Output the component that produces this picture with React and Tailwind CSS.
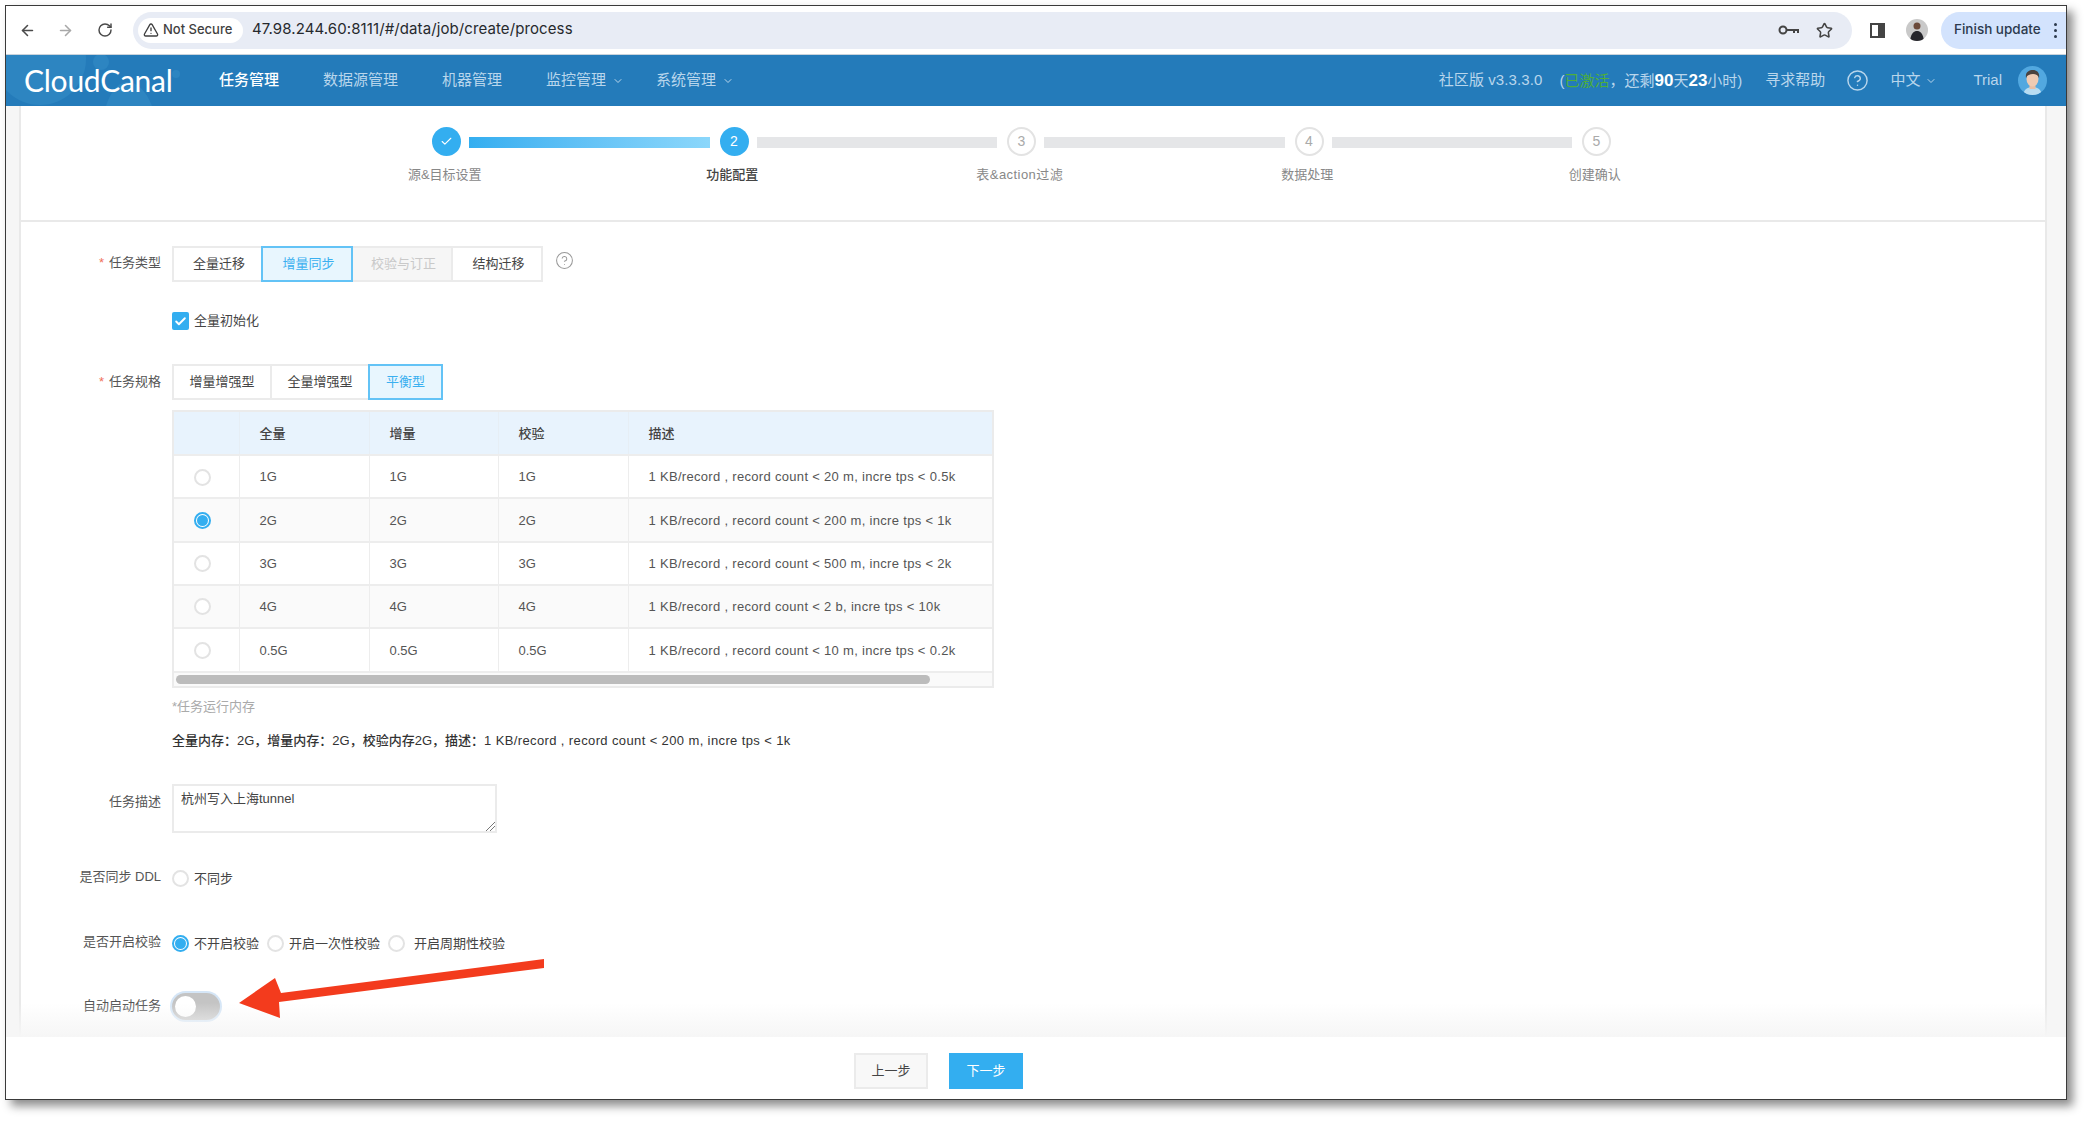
import React from 'react';
import { ArrowLeft, ArrowRight, RotateCw, TriangleAlert, Star, ChevronDown, Check, CircleHelp } from 'lucide-react';

const steps = ['源&目标设置', '功能配置', '表&action过滤', '数据处理', '创建确认'];

const specs = [
  ['1G', '1 KB/record , record count < 20 m, incre tps < 0.5k'],
  ['2G', '1 KB/record , record count < 200 m, incre tps < 1k'],
  ['3G', '1 KB/record , record count < 500 m, incre tps < 2k'],
  ['4G', '1 KB/record , record count < 2 b, incre tps < 10k'],
  ['0.5G', '1 KB/record , record count < 10 m, incre tps < 0.2k'],
];

function Radio({ on }) {
  return (
    <span className={`flex h-[17px] w-[17px] shrink-0 items-center justify-center rounded-full border-2 bg-white ${on ? 'border-[#33aef0]' : 'border-[#e3e3e3]'}`}>
      {on && <span className="h-[11px] w-[11px] rounded-full bg-[#33aef0]" />}
    </span>
  );
}

function Seg({ items, nudge }) {
  return (
    <div className="flex h-[36px]">
      {items.map(([label, w, state]) => (
        <div
          key={label}
          style={{ width: w }}
          className={`-ml-[2px] flex items-center justify-center border-2 first:ml-0 ${nudge ? 'pl-[3px]' : ''} ${
            state === 'on'
              ? 'z-10 border-[#63c3f6] bg-[#e8f6fe] text-[#3ab0f0]'
              : state === 'off'
                ? 'border-[#ebebeb] bg-[#f6f6f6] text-[#c9c9c9]'
                : 'border-[#ebebeb] bg-white text-[#444]'
          }`}
        >
          {label}
        </div>
      ))}
    </div>
  );
}

function Label({ children, req }) {
  return (
    <div className="w-[140px] shrink-0 text-right text-[#555]">
      {req && <span className="mr-[5px] text-[#f0715a]">*</span>}
      {children}
    </div>
  );
}

function Logo() {
  return (
    <div className="relative z-10 -mt-[2px] w-[150px] font-['Lato',sans-serif] text-[30px] leading-[30px] font-normal tracking-[-0.25px] text-white">
      CloudCanal
    </div>
  );
}

export default function App() {
  return (
    <div className="relative h-[1122px] w-[2088px] overflow-hidden bg-white font-['Liberation_Sans','Noto_Sans_CJK_SC',sans-serif] text-[13px]">
      <div className="ml-[5px] mt-[5px] flex h-[1095px] w-[2062px] flex-col border border-[#3a3a3a] bg-white shadow-[6px_6px_9px_rgba(0,0,0,0.45)]">
        {/* chrome bar */}
        <div className="flex h-[49px] shrink-0 items-center border-b border-[#c9d3dc] pl-[13px] font-['Inter',sans-serif] text-[#3c4043]">
          <ArrowLeft className="h-[17px] w-[17px] text-[#4a4a4a]" strokeWidth={2.2} />
          <ArrowRight className="ml-[21px] h-[17px] w-[17px] text-[#a8a8a8]" strokeWidth={2.2} />
          <RotateCw className="ml-[23px] h-[16px] w-[16px] text-[#4a4a4a]" strokeWidth={2.2} />
          <div className="ml-[20px] flex h-[37px] w-[1719px] items-center rounded-full bg-[#e8ecf5] pl-[5px] pr-[19px]">
            <div className="flex h-[25px] w-[105px] items-center rounded-full bg-white pl-[5px] text-[13px] font-medium text-[#3f3f3f]">
              <TriangleAlert className="mr-[4px] h-[16px] w-[16px]" strokeWidth={2} />
              Not Secure
            </div>
            <span className="ml-[9px] -mt-[1px] text-[15px] tracking-[0.1px] text-[#26292d]">47.98.244.60:8111/#/data/job/create/process</span>
            <svg className="ml-auto h-[12px] w-[22px] text-[#444]" viewBox="0 0 22 12" fill="none" stroke="currentColor" strokeWidth="2">
              <circle cx="5" cy="6" r="3.5" />
              <path d="M9 6h11v3M16 6v3" />
            </svg>
            <Star className="ml-[16px] h-[17px] w-[17px] text-[#444]" strokeWidth={2.2} />
          </div>
          <svg className="ml-[18px] h-[15px] w-[15px]" viewBox="0 0 15 15">
            <rect x="1" y="1" width="13" height="13" fill="#fff" stroke="#444" strokeWidth="2" />
            <rect x="8" y="1" width="6" height="13" fill="#444" />
          </svg>
          <svg className="ml-[21px] h-[22px] w-[22px] rounded-full" viewBox="0 0 22 22">
            <rect width="22" height="22" fill="#c9c9c9" />
            <circle cx="11" cy="7" r="3.5" fill="#6b4a3a" />
            <path d="M4 22c1-8 4-10 7-10s6 2 7 10z" fill="#26262c" />
          </svg>
          <div className="ml-[13px] flex h-[37px] w-[125px] items-center rounded-l-full bg-[#d3e3fd] pl-[13px] text-[13.5px] font-medium text-[#2c3a4d]">
            <span className="-mt-[1px]">Finish update</span>
            <span className="ml-[13px] flex flex-col gap-[3px]">
              <i className="h-[3px] w-[3px] rounded-full bg-[#2c3a4d]" />
              <i className="h-[3px] w-[3px] rounded-full bg-[#2c3a4d]" />
              <i className="h-[3px] w-[3px] rounded-full bg-[#2c3a4d]" />
            </span>
          </div>
        </div>

        {/* header */}
        <div className="relative flex h-[51px] shrink-0 items-center overflow-hidden bg-[#247bba] pl-[18px] pr-[19px] text-[15px] text-[#b9d6ec]">
          <svg className="absolute left-0 top-0 h-[51px] w-[180px]" viewBox="0 0 180 51">
            <circle cx="34" cy="4" r="46" fill="#2d85c1" />
            <circle cx="95" cy="7" r="8" fill="#2d85c1" />
            <path d="M100 51c6-18 14-24 22-24s18 8 24 24z" fill="#2d85c1" />
            <circle cx="170" cy="19" r="4" fill="#2d85c1" />
          </svg>
          <Logo />
          <div className="relative ml-[45px] flex items-center gap-[44px]">
            <span className="font-medium text-white">任务管理</span>
            <span>数据源管理</span>
            <span>机器管理</span>
            <span className="flex items-center">监控管理<ChevronDown className="ml-[6px] h-[12px] w-[12px]" /></span>
            <span className="-ml-[12px] flex items-center">系统管理<ChevronDown className="ml-[6px] h-[12px] w-[12px]" /></span>
          </div>
          <div className="ml-auto flex items-center text-[15px]">
            <span className="tracking-[0.1px]">社区版 v3.3.3.0</span>
            <span className="ml-[17px]">
              (<span className="text-[#4eae3a]">已激活</span>{'\uff0c'}还剩<b className="text-[17px] text-white">90</b>天<b className="text-[17px] text-white">23</b>小时)
            </span>
            <span className="ml-[23px]">寻求帮助</span>
            <CircleHelp className="ml-[21px] h-[23px] w-[23px]" strokeWidth={1.5} />
            <span className="ml-[21px] flex items-center">中文<ChevronDown className="ml-[5px] h-[12px] w-[12px]" /></span>
            <span className="ml-[36px]">Trial</span>
            <svg className="ml-[16px] h-[29px] w-[29px]" viewBox="0 0 29 29">
              <clipPath id="av"><circle cx="14.5" cy="14.5" r="14.5" /></clipPath>
              <g clipPath="url(#av)">
                <rect width="29" height="29" fill="#52a8e0" />
                <path d="M5 29c1-6 5-8 9.5-8s8.500 2 9.500 8z" fill="#b7dcf2" />
                <rect x="11.500" y="17" width="6" height="6" fill="#e8bfa6" />
                <ellipse cx="14.500" cy="13" rx="6" ry="7.500" fill="#efcbb3" />
                <path d="M8 12c-1-6 3-8 7-8s7 3 6 8c-1-3-3-4-6-4s-6 1-7 4z" fill="#4a4340" />
              </g>
            </svg>
          </div>
        </div>

        {/* page body */}
        <div className="relative flex min-h-0 flex-1 overflow-hidden">
          <div className="w-[15px] shrink-0 border-r-2 border-[#e9e9e9] bg-[#f6f6f6]" />
          <div className="min-w-0 flex-1">
            <div className="h-[116px] border-b-2 border-[#e9e9e9] pl-[411px] pt-[21px]">
              <div className="flex items-center">
                {steps.map((s, i) => (
                  <React.Fragment key={s}>
                    {i > 0 && (
                      <div className={`ml-[8px] mr-[10px] mt-[1px] h-[11px] w-[240.5px] ${i === 1 ? 'bg-gradient-to-r from-[#33aef0] to-[#8bd7fb]' : 'bg-[#e5e6e8]'}`} />
                    )}
                    <div
                      className={`flex h-[29px] w-[29px] shrink-0 items-center justify-center rounded-full text-[14px] ${
                        i < 2 ? 'bg-[#33aef0] text-white' : 'border-2 border-[#e3e3e3] bg-white text-[#aaa]'
                      }`}
                    >
                      {i === 0 ? <Check className="h-[13px] w-[13px]" strokeWidth={2} /> : i + 1}
                    </div>
                  </React.Fragment>
                ))}
              </div>
              <div className="-ml-[131px] mt-[9px] flex">
                {steps.map((s, i) => (
                  <div key={s} className={`w-[287.5px] text-center ${i === 1 ? 'font-medium text-[#444]' : 'text-[#888]'} ${i === 2 ? 'tracking-[0.45px]' : ''}`}>{s}</div>
                ))}
              </div>
            </div>

            <div className="pt-[24px] text-[13px]">
              <div className="flex items-start">
                <div className="pt-[7px]"><Label req>任务类型</Label></div>
                <div className="ml-[11px] flex items-start">
                  <Seg nudge items={[['全量迁移', 91], ['增量同步', 92, 'on'], ['校验与订正', 102, 'off'], ['结构迁移', 92]]} />
                  <CircleHelp className="ml-[12px] mt-[5px] h-[19px] w-[19px] text-[#999]" strokeWidth={1.3} />
                </div>
              </div>

              <div className="ml-[151px] mt-[30px] flex h-[18px] items-center">
                <span className="flex h-[18px] w-[17px] items-center justify-center rounded-[2px] bg-[#33aef0]">
                  <Check className="h-[13px] w-[13px] text-white" strokeWidth={3.5} />
                </span>
                <span className="ml-[5px] text-[#444]">全量初始化</span>
              </div>

              <div className="mt-[34px] flex items-center">
                <Label req>任务规格</Label>
                <div className="ml-[11px]">
                  <Seg items={[['增量增强型', 100], ['全量增强型', 100], ['平衡型', 75, 'on']]} />
                </div>
              </div>

              <div className="ml-[151px] mt-[10px] w-[822px] border-2 border-[#ebebeb] text-[#555]">
                <table className="w-full table-fixed border-collapse">
                  <colgroup>
                    <col className="w-[65px]" />
                    <col className="w-[130px]" />
                    <col className="w-[129px]" />
                    <col className="w-[130px]" />
                    <col />
                  </colgroup>
                  <thead>
                    <tr className="h-[43px] bg-[#e8f3fd] text-left font-medium text-[#444]">
                      <th className="border-r border-[#e6eef5]" />
                      <th className="border-r border-[#e6eef5] pl-[20px] pt-[1px] font-medium">全量</th>
                      <th className="border-r border-[#e6eef5] pl-[20px] pt-[1px] font-medium">增量</th>
                      <th className="border-r border-[#e6eef5] pl-[20px] pt-[1px] font-medium">校验</th>
                      <th className="pl-[20px] pt-[1px] font-medium">描述</th>
                    </tr>
                  </thead>
                  <tbody>
                    {specs.map(([mem, desc], i) => (
                      <tr key={mem} className={`h-[43.25px] border-t-2 border-[#ededed] ${i % 2 ? 'bg-[#fafafa]' : 'bg-white'}`}>
                        <td className="border-r border-[#ededed] pl-[20px] pt-[1px]"><Radio on={i === 1} /></td>
                        <td className="border-r border-[#ededed] pl-[20px] pt-[1px]">{mem}</td>
                        <td className="border-r border-[#ededed] pl-[20px] pt-[1px]">{mem}</td>
                        <td className="border-r border-[#ededed] pl-[20px] pt-[1px]">{mem}</td>
                        <td className="pl-[20px] pt-[1px] tracking-[0.31px]">{desc}</td>
                      </tr>
                    ))}
                  </tbody>
                </table>
                <div className="h-[15px] border-t-2 border-[#ededed] bg-[#fafafa] px-[2px] pt-[2px]">
                  <div className="h-[9px] w-[754px] rounded-full bg-[#bcbcbc]" />
                </div>
              </div>

              <div className="ml-[151px] mt-[9px] text-[#aaa]">*任务运行内存</div>
              <div className="ml-[151px] mt-[14px] font-medium text-[#333]">
                {'全量内存\uff1a2G\uff0c增量内存\uff1a2G\uff0c校验内存2G\uff0c描述\uff1a'}
                <span className="tracking-[0.38px]">1 KB/record , record count &lt; 200 m, incre tps &lt; 1k</span>
              </div>

              <div className="mt-[34px] flex items-start">
                <div className="pt-[8px]"><Label>任务描述</Label></div>
                <div className="relative ml-[11px] h-[49px] w-[325px] border-2 border-[#ebebeb] pl-[7px] pt-[3px] text-[#444]">
                  杭州写入上海tunnel
                  <svg className="absolute bottom-0 right-0 h-[10px] w-[10px] text-[#777]" viewBox="0 0 10 10" fill="none" stroke="currentColor">
                    <path d="M1 10 10 1M5 10l5-5" />
                  </svg>
                </div>
              </div>

              <div className="mt-[34px] flex items-center">
                <div className="pb-[3px]"><Label>是否同步 DDL</Label></div>
                <div className="ml-[11px] flex items-center">
                  <Radio />
                  <span className="ml-[5px] text-[#444]">不同步</span>
                </div>
              </div>

              <div className="mt-[42px] flex items-center">
                <div className="pb-[4px]"><Label>是否开启校验</Label></div>
                <div className="ml-[11px] flex items-center text-[#444]">
                  <Radio on />
                  <span className="ml-[5px]">不开启校验</span>
                  <span className="ml-[8px]"><Radio /></span>
                  <span className="ml-[5px]">开启一次性校验</span>
                  <span className="ml-[8px]"><Radio /></span>
                  <span className="ml-[9px]">开启周期性校验</span>
                </div>
              </div>

              <div className="mt-[38px] flex items-center">
                <div className="pb-[3px]"><Label>自动启动任务</Label></div>
                <div className="ml-[11px] flex h-[27px] w-[48px] items-center rounded-full bg-[#c4c4c4] pl-[3px] shadow-[0_0_0_2px_#d5e6f7]">
                  <span className="h-[21px] w-[21px] rounded-full bg-white" />
                </div>
              </div>
            </div>
          </div>
          <div className="w-[21px] shrink-0 border-l-2 border-[#e9e9e9] bg-[#f6f6f6]" />
          <div className="pointer-events-none absolute bottom-0 left-0 h-[34px] w-full bg-gradient-to-b from-transparent to-[#f6f6f6]" />
        </div>

        {/* footer */}
        <div className="flex h-[62px] shrink-0 items-start bg-white pl-[848px] pt-[16px]">
          <button className="h-[36px] w-[74px] border-2 border-[#ebebeb] bg-[#f8f8f8] text-[13px] text-[#444]">上一步</button>
          <button className="ml-[21px] h-[36px] w-[74px] bg-[#33aef0] text-[13px] text-white">下一步</button>
        </div>
      </div>

      {/* red annotation arrow */}
      <svg className="pointer-events-none absolute left-0 top-0 h-[1122px] w-[2088px]" viewBox="0 0 2088 1122">
        <polygon points="544,959 281,993 275,978 239,1003 280,1018 279,1002 544,968" fill="#f33b1d" />
      </svg>
    </div>
  );
}
